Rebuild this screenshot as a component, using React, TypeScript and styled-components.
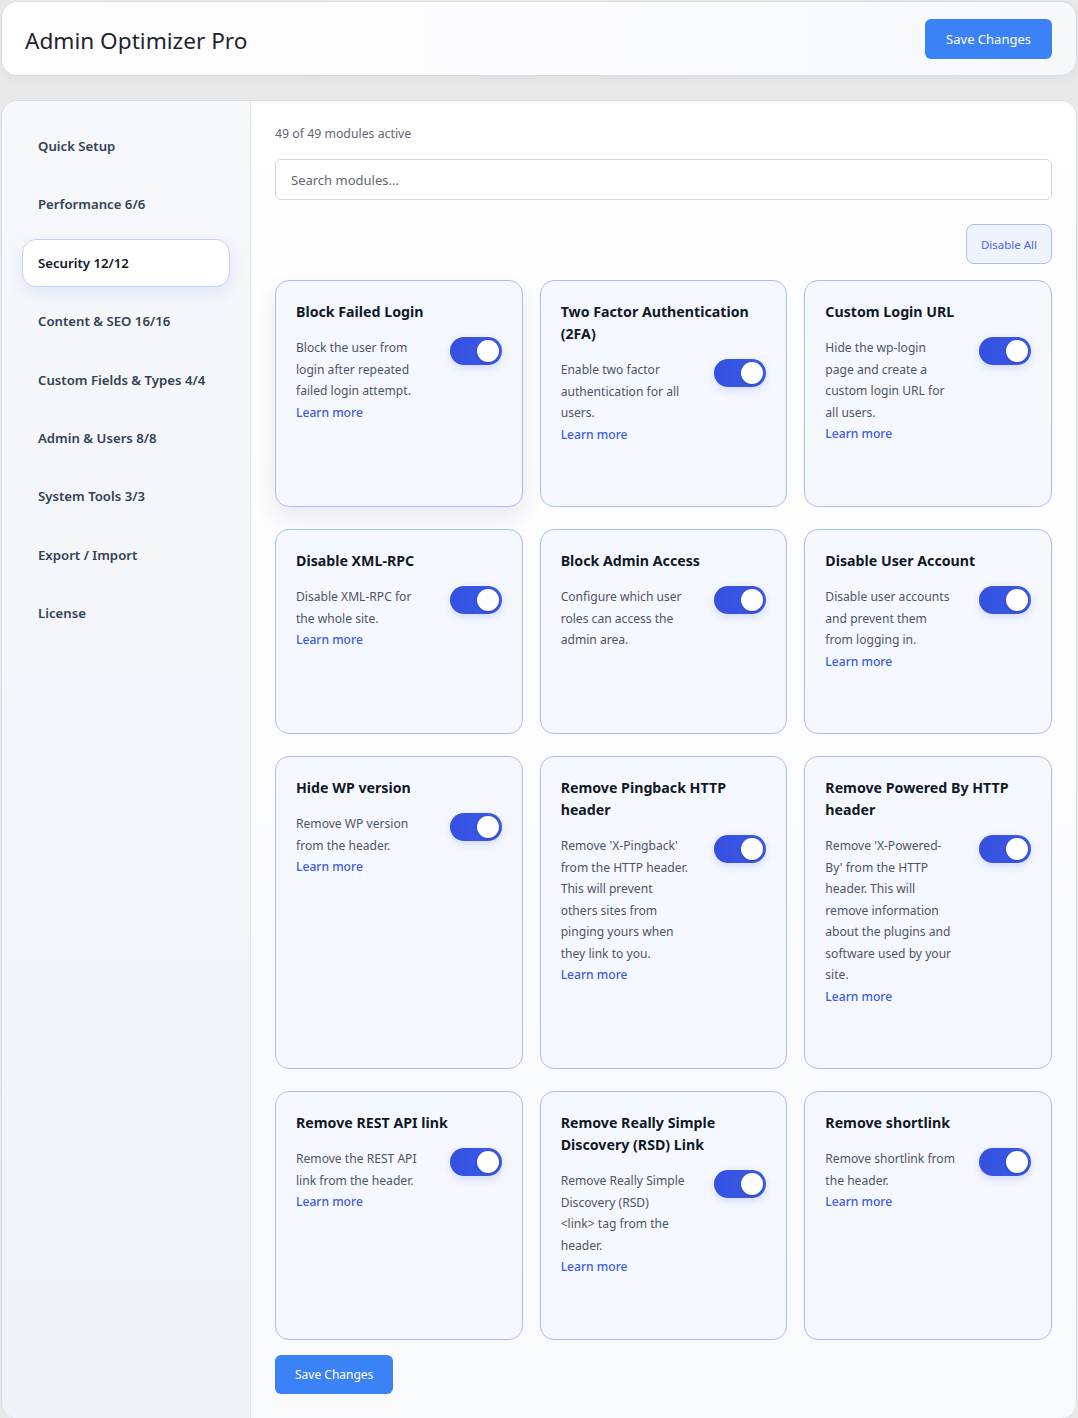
import styled, { createGlobalStyle } from "styled-components";

const GlobalStyle = createGlobalStyle`
  body {
    margin: 0;
    background: #e9e9ea;
    font-family: "Noto Sans", "Open Sans", sans-serif;
  }
  * {
    box-sizing: border-box;
  }
`;

const Page = styled.div`
  padding: 1px 1px 0 1px;
  display: flex;
  flex-direction: column;
  gap: 24px;
`;

const Header = styled.header`
  height: 75px;
  display: flex;
  align-items: center;
  justify-content: space-between;
  padding: 0 24px 0 23px;
  border: 1px solid #dcdde0;
  border-radius: 16px;
  background: linear-gradient(90deg, #ffffff 0%, #f7f8fb 100%);
  box-shadow: 0 4px 12px rgba(0, 0, 0, 0.04);

  h1 {
    margin: 0;
    padding-top: 4px;
    font-size: 22.6px;
    font-weight: 400;
    color: #1f2430;
  }
`;

const PrimaryButton = styled.button<{ $h: number; $fs: number; $px: number }>`
  height: ${(p) => p.$h}px;
  padding: 0 ${(p) => p.$px}px;
  border: none;
  border-radius: 6px;
  background: #3b82f6;
  color: #fff;
  font-family: inherit;
  font-size: ${(p) => p.$fs}px;
  cursor: pointer;
`;

const Main = styled.div`
  display: flex;
  min-height: 1317px;
  border: 1px solid #dcdde0;
  border-radius: 16px;
  overflow: hidden;
`;

const Sidebar = styled.nav`
  width: 249px;
  flex-shrink: 0;
  padding: 21px 20px;
  background: linear-gradient(180deg, #f6f8fb 0%, #f0f3f8 100%);
  border-right: 1px solid #e1e6ee;
  display: flex;
  flex-direction: column;
  gap: 10.4px;
`;

const NavItem = styled.div<{ $active?: boolean }>`
  height: 48px;
  flex-shrink: 0;
  display: flex;
  align-items: center;
  padding-left: 15px;
  font-size: 13.2px;
  font-weight: 600;
  color: ${(p) => (p.$active ? "#111827" : "#334155")};
  border-radius: 14px;
  border: 1px solid ${(p) => (p.$active ? "#c3d1fb" : "transparent")};
  background: ${(p) => (p.$active ? "#ffffff" : "transparent")};
  box-shadow: ${(p) =>
    p.$active ? "0 6px 16px rgba(99, 118, 220, 0.14)" : "none"};
`;

const Content = styled.section`
  flex: 1;
  padding: 24px 24px;
  background: linear-gradient(180deg, #ffffff 0%, #f9fafc 100%);
  display: flex;
  flex-direction: column;
  align-items: flex-start;

  & > * {
    flex-shrink: 0;
  }
`;

const Count = styled.div`
  font-size: 12.3px;
  color: #5f6673;
  line-height: 18px;
`;

const Search = styled.input`
  width: 100%;
  height: 41px;
  margin-top: 16px;
  padding: 0 15px;
  border: 1px solid #d3d6dc;
  border-radius: 6px;
  font-family: inherit;
  font-size: 13px;
  background: #fff;
  color: #333;
  outline: none;

  &::placeholder {
    color: #5f6673;
  }
`;

const Toolbar = styled.div`
  width: 100%;
  display: flex;
  justify-content: flex-end;
  margin-top: 24px;
`;

const GhostButton = styled.button`
  height: 40px;
  padding: 0 14px;
  border: 1px solid #a9bcf6;
  border-radius: 8px;
  background: #eef3fe;
  color: #4a66e2;
  font-family: inherit;
  font-size: 11.5px;
  cursor: pointer;
`;

const Grid = styled.div`
  width: 100%;
  margin-top: 16px;
  margin-bottom: 15px;
  display: grid;
  grid-template-columns: repeat(3, 1fr);
  column-gap: 17px;
  row-gap: 22px;
`;

const Card = styled.div<{ $hover?: boolean }>`
  padding: 20px 20px 61px 20px;
  border: 1px solid #a8bdf5;
  border-radius: 14px;
  background: #f6f8ff;
  box-shadow: ${(p) =>
    p.$hover ? "0 10px 24px rgba(30, 41, 80, 0.1)" : "none"};
`;

const CardTitle = styled.h3`
  margin: 0 0 14px 0;
  font-size: 14.2px;
  font-weight: 700;
  line-height: 22px;
  color: #111827;
`;

const CardBody = styled.div`
  display: flex;
  align-items: flex-start;
  justify-content: space-between;
`;

const Desc = styled.p`
  flex: 0 0 130.5px;
  margin: 0;
  font-size: 12.1px;
  line-height: 21.5px;
  color: #4b5563;

  a {
    display: block;
    color: #3c5be0;
    font-weight: 500;
    text-decoration: none;
  }
`;

const Toggle = styled.div<{ $on?: boolean }>`
  position: relative;
  width: 52px;
  height: 28px;
  flex-shrink: 0;
  border-radius: 14px;
  background: ${(p) =>
    p.$on ? "linear-gradient(90deg, #3450de 0%, #3c5ae8 100%)" : "#cbd5e1"};
  box-shadow: 0 3px 8px rgba(52, 80, 222, 0.18);

  &::after {
    content: "";
    position: absolute;
    top: 3px;
    left: ${(p) => (p.$on ? "27px" : "3px")};
    width: 22px;
    height: 22px;
    border-radius: 50%;
    background: #fff;
    box-shadow: 0 1px 3px rgba(0, 0, 0, 0.2);
  }
`;

const nav = [
  "Quick Setup",
  "Performance 6/6",
  "Security 12/12",
  "Content & SEO 16/16",
  "Custom Fields & Types 4/4",
  "Admin & Users 8/8",
  "System Tools 3/3",
  "Export / Import",
  "License",
];

const modules = [
  {
    title: "Block Failed Login",
    desc: "Block the user from login after repeated failed login attempt.",
    link: true,
  },
  {
    title: "Two Factor Authentication (2FA)",
    desc: "Enable two factor authentication for all users.",
    link: true,
  },
  {
    title: "Custom Login URL",
    desc: "Hide the wp-login page and create a custom login URL for all users.",
    link: true,
  },
  {
    title: "Disable XML-RPC",
    desc: "Disable XML-RPC for the whole site.",
    link: true,
  },
  {
    title: "Block Admin Access",
    desc: "Configure which user roles can access the admin area.",
    link: false,
  },
  {
    title: "Disable User Account",
    desc: "Disable user accounts and prevent them from logging in.",
    link: true,
  },
  {
    title: "Hide WP version",
    desc: "Remove WP version from the header.",
    link: true,
  },
  {
    title: "Remove Pingback HTTP header",
    desc: "Remove 'X-Pingback' from the HTTP header. This will prevent others sites from pinging yours when they link to you.",
    link: true,
  },
  {
    title: "Remove Powered By HTTP header",
    desc: "Remove 'X-Powered-By' from the HTTP header. This will remove information about the plugins and software used by your site.",
    link: true,
  },
  {
    title: "Remove REST API link",
    desc: "Remove the REST API link from the header.",
    link: true,
  },
  {
    title: "Remove Really Simple Discovery (RSD) Link",
    desc: "Remove Really Simple Discovery (RSD) <link>\u00a0tag from the header.",
    link: true,
  },
  {
    title: "Remove shortlink",
    desc: "Remove shortlink from the header.",
    link: true,
  },
];

function App() {
  return (
    <Page>
      <GlobalStyle />
      <Header>
        <h1>Admin Optimizer Pro</h1>
        <PrimaryButton $h={40} $fs={13} $px={21}>
          Save Changes
        </PrimaryButton>
      </Header>
      <Main>
        <Sidebar>
          {nav.map((n) => (
            <NavItem key={n} $active={n === "Security 12/12"}>
              {n}
            </NavItem>
          ))}
        </Sidebar>
        <Content>
          <Count>49 of 49 modules active</Count>
          <Search placeholder="Search modules..." />
          <Toolbar>
            <GhostButton>Disable All</GhostButton>
          </Toolbar>
          <Grid>
            {modules.map((m, i) => (
              <Card key={m.title} $hover={i === 0}>
                <CardTitle>{m.title}</CardTitle>
                <CardBody>
                  <Desc>
                    {m.desc}
                    {m.link && <a href="#">Learn more</a>}
                  </Desc>
                  <Toggle $on />
                </CardBody>
              </Card>
            ))}
          </Grid>
          <PrimaryButton $h={39} $fs={12} $px={20}>
            Save Changes
          </PrimaryButton>
        </Content>
      </Main>
    </Page>
  );
}

export default App;
